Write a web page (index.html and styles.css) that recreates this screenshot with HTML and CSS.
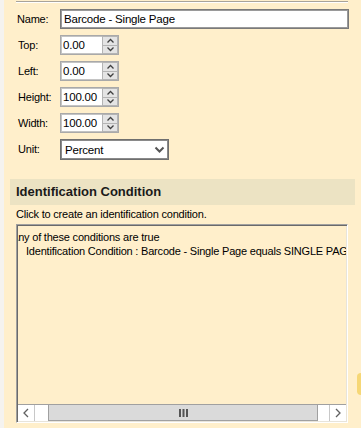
FILE: index.html
```html
<!DOCTYPE html>
<html>
<head>
<meta charset="utf-8">
<link rel="stylesheet" href="styles.css">
</head>
<body>
<div class="page">
  <div class="rule"></div>
  <div class="form">
    <label class="lbl">Name:</label>
    <div class="textbox name">Barcode - Single Page</div>

    <label class="lbl">Top:</label>
    <div class="spin">
      <div class="spin-val">0.00</div>
      <div class="spin-btns">
        <div class="sbtn"><svg width="9" height="6" viewBox="0 0 9 6"><polyline points="1.5,4.5 4.5,1.5 7.5,4.5" fill="none" stroke="#404040" stroke-width="1.3"/></svg></div>
        <div class="sbtn"><svg width="9" height="6" viewBox="0 0 9 6"><polyline points="1.5,1.5 4.5,4.5 7.5,1.5" fill="none" stroke="#404040" stroke-width="1.3"/></svg></div>
      </div>
    </div>

    <label class="lbl">Left:</label>
    <div class="spin">
      <div class="spin-val">0.00</div>
      <div class="spin-btns">
        <div class="sbtn"><svg width="9" height="6" viewBox="0 0 9 6"><polyline points="1.5,4.5 4.5,1.5 7.5,4.5" fill="none" stroke="#404040" stroke-width="1.3"/></svg></div>
        <div class="sbtn"><svg width="9" height="6" viewBox="0 0 9 6"><polyline points="1.5,1.5 4.5,4.5 7.5,1.5" fill="none" stroke="#404040" stroke-width="1.3"/></svg></div>
      </div>
    </div>

    <label class="lbl">Height:</label>
    <div class="spin">
      <div class="spin-val">100.00</div>
      <div class="spin-btns">
        <div class="sbtn"><svg width="9" height="6" viewBox="0 0 9 6"><polyline points="1.5,4.5 4.5,1.5 7.5,4.5" fill="none" stroke="#404040" stroke-width="1.3"/></svg></div>
        <div class="sbtn"><svg width="9" height="6" viewBox="0 0 9 6"><polyline points="1.5,1.5 4.5,4.5 7.5,1.5" fill="none" stroke="#404040" stroke-width="1.3"/></svg></div>
      </div>
    </div>

    <label class="lbl">Width:</label>
    <div class="spin">
      <div class="spin-val">100.00</div>
      <div class="spin-btns">
        <div class="sbtn"><svg width="9" height="6" viewBox="0 0 9 6"><polyline points="1.5,4.5 4.5,1.5 7.5,4.5" fill="none" stroke="#404040" stroke-width="1.3"/></svg></div>
        <div class="sbtn"><svg width="9" height="6" viewBox="0 0 9 6"><polyline points="1.5,1.5 4.5,4.5 7.5,1.5" fill="none" stroke="#404040" stroke-width="1.3"/></svg></div>
      </div>
    </div>

    <label class="lbl">Unit:</label>
    <div class="select">
      <span>Percent</span>
      <svg width="11" height="7" viewBox="0 0 11 7"><polyline points="1.5,1.5 5.5,5.5 9.5,1.5" fill="none" stroke="#555" stroke-width="2"/></svg>
    </div>
  </div>

  <div class="section-head">Identification Condition</div>
  <div class="hint">Click to create an identification condition.</div>

  <div class="listbox">
    <div class="list-content">
      <div class="item first">Any of these conditions are true</div>
      <div class="item child">Identification Condition : Barcode - Single Page equals SINGLE PAGE</div>
    </div>
    <div class="hscroll">
      <div class="arrow"><svg width="8" height="10" viewBox="0 0 8 10"><polyline points="6,1 2,5 6,9" fill="none" stroke="#606060" stroke-width="1.3"/></svg></div>
      <div class="track left"></div>
      <div class="thumb"><svg width="9" height="8" viewBox="0 0 9 8"><rect x="0" y="0" width="2" height="8" fill="#555"/><rect x="3.5" y="0" width="2" height="8" fill="#555"/><rect x="7" y="0" width="2" height="8" fill="#555"/></svg></div>
      <div class="track right"></div>
      <div class="arrow"><svg width="8" height="10" viewBox="0 0 8 10"><polyline points="2,1 6,5 2,9" fill="none" stroke="#606060" stroke-width="1.3"/></svg></div>
    </div>
  </div>
</div>
<div class="blob"></div>
</body>
</html>
```

FILE: styles.css
```css
html, body {
  margin: 0;
  padding: 0;
}
body {
  width: 361px;
  height: 428px;
  overflow: hidden;
  background: #ffefcb;
  font-family: "Liberation Sans", Arial, sans-serif;
  font-size: 11px;
  letter-spacing: -0.2px;
  color: #000;
  position: relative;
}
.page {
  border-left: 4px solid #f5f3ef;
  height: 428px;
  box-sizing: border-box;
  display: flex;
  flex-direction: column;
}
.rule {
  margin: 1px 0 0 12px;
  width: 332px;
  height: 1px;
  background: #a8a39a;
  border-bottom: 1px solid #ffffff;
}
.form {
  margin: 6px 0 0 13px;
  display: grid;
  grid-template-columns: 43px auto;
  grid-auto-rows: 20px;
  row-gap: 6px;
  align-items: center;
  justify-items: start;
}
.form .lbl:nth-of-type(n+2) {
  padding-left: 1px;
}
.lbl {
  line-height: 20px;
}
.textbox {
  box-sizing: border-box;
  height: 20px;
  background: #fff;
  border: 1px solid #7a7a7a;
  box-shadow: inset 0 0 0 1px #9a9a9a;
  padding: 0 3px;
  line-height: 18px;
  font-size: 11.5px;
}
.name {
  width: 289px;
}
.spin {
  box-sizing: border-box;
  width: 59px;
  height: 20px;
  display: flex;
  border: 1px solid #a9a9a9;
  box-shadow: inset 0 0 0 1px #c4c4c4;
  background: #fff;
}
.spin-val {
  flex: 1;
  padding-left: 2px;
  line-height: 18px;
  font-size: 11.5px;
}
.spin-btns {
  width: 16px;
  background: #b4b4b4;
  display: flex;
  flex-direction: column;
  gap: 1px;
  padding: 1px;
  box-sizing: border-box;
}
.sbtn {
  flex: 1;
  background: #e4e4e4;
  display: flex;
  align-items: center;
  justify-content: center;
}
.select {
  box-sizing: border-box;
  width: 109px;
  height: 21px;
  margin-top: 1px;
  background: #fff;
  border: 1px solid #6f6f6f;
  box-shadow: inset 0 0 0 1px #8a8a8a;
  display: flex;
  align-items: center;
  justify-content: space-between;
  padding: 0 3px 0 4px;
  font-size: 11.5px;
}
.section-head {
  margin: 20px 0 0 6px;
  width: 345px;
  height: 26px;
  background: #ece3c3;
  font-weight: bold;
  font-size: 13px;
  letter-spacing: 0;
  line-height: 26px;
  padding-left: 6px;
  box-sizing: border-box;
  color: #1a1a1a;
}
.hint {
  margin: 2px 0 0 12px;
  line-height: 14px;
}
.listbox {
  margin: 3px 0 0 12px;
  width: 332px;
  height: 199px;
  box-sizing: border-box;
  border-top: 1px solid #a0a0a0;
  border-left: 1px solid #a0a0a0;
  border-right: 1px solid #ffffff;
  border-bottom: 1px solid #ffffff;
  box-shadow: inset 1px 1px 0 #6a6a6a, inset -1px -1px 0 #e8e4da;
  padding: 1px;
  display: flex;
  flex-direction: column;
}
.list-content {
  flex: 1;
  overflow: hidden;
  padding-top: 4px;
}
.item {
  white-space: nowrap;
  line-height: 14px;
  height: 14px;
}
.item.first {
  margin-left: -7px;
}
.item.child {
  margin-left: 8px;
}
.hscroll {
  height: 17px;
  display: flex;
  background: #fff;
  border-top: 1px solid #a0a0a0;
  box-sizing: border-box;
}
.arrow {
  width: 16px;
  display: flex;
  align-items: center;
  justify-content: center;
  background: #fff;
  border-right: 1px solid #c8c8c8;
}
.arrow:last-child {
  border-right: 0;
  border-left: 1px solid #c8c8c8;
}
.track.left {
  width: 13px;
}
.track.right {
  width: 11px;
}
.thumb {
  flex: 1;
  background: #dadada;
  border: 1px solid #a0a0a0;
  border-top: 0;
  display: flex;
  align-items: center;
  justify-content: center;
}
.blob {
  position: absolute;
  left: 357px;
  top: 373px;
  width: 4px;
  height: 22px;
  border-radius: 12px 0 0 12px / 11px 0 0 11px;
  background: #f6d776;
}
```
